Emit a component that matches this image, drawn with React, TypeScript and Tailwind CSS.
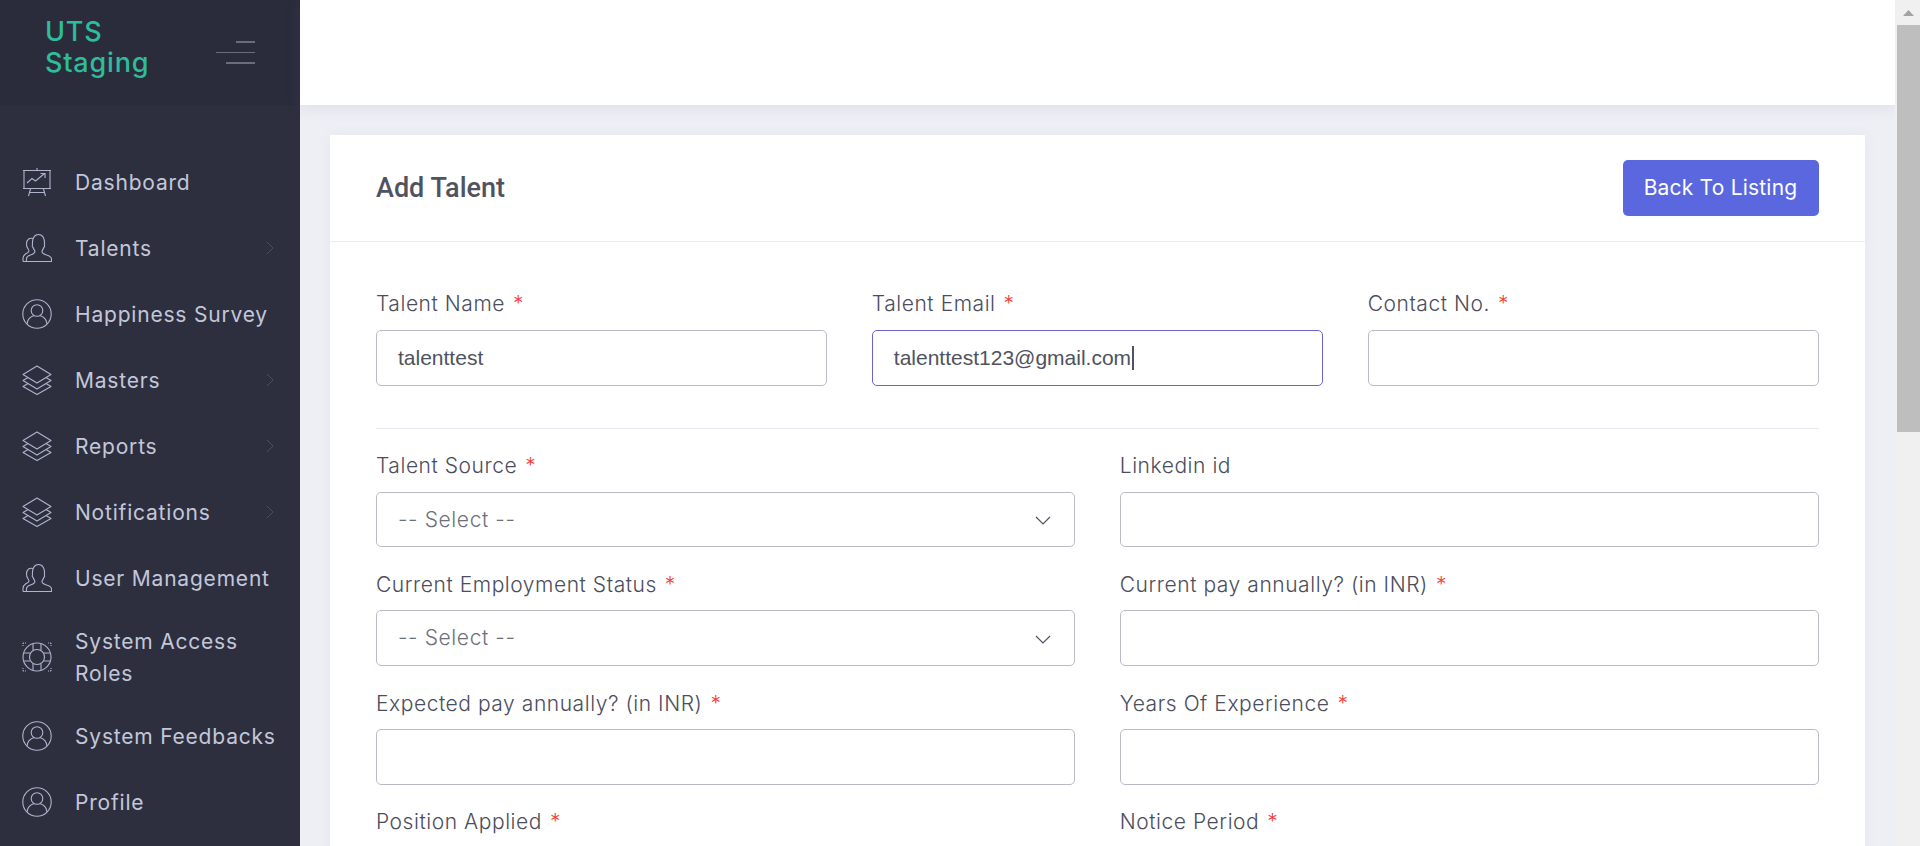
import React from "react";

const poppinsLike = "font-[family-name:Inter,sans-serif]";

function PresentationIcon() {
  return (
    <svg width="30" height="30" viewBox="0 0 30 30" fill="none" stroke="#aeb4cc" strokeWidth="1.1">
      <path d="M15 1v2M1 3.500h28M2 3.500V21.500h26V3.500M1 21.500h28" />
      <path d="M5 16l5-4.500 3.500 2.500 9-7.500M18.500 6.500h4.500v4.500" />
      <path d="M8.500 22l-2 7M21.500 22l2 7M7.500 25.500h15" />
    </svg>
  );
}

function UsersIcon() {
  return (
    <svg width="30" height="30" viewBox="0 0 30 30" fill="none" stroke="#aeb4cc" strokeWidth="1.1">
      <path d="M1 28.500h28.500V26c0-2-1.500-3-5-4-2.500-.8-4.500-1.500-4.500-3.500 0-1 1.200-2 1.800-4 .6-.3 1-1.500.6-2.700C23 6 21 1.500 16.500 1.500S10 6 10.500 11.800c-.4 1.200 0 2.400.6 2.700.6 2 1.800 3 1.800 4 0 2-2 2.700-4.500 3.500-2.500.8-3.800 1.800-3.900 3.500l-.1 3.500" />
      <path d="M11 5.500C8 4.500 4.500 6 4.500 11c0 1.500.3 3 1.200 4.300.5 1 1.300 1.700 1.300 2.700 0 1.500-2 2.200-3.500 3C2 22 1 23.500 1 25.500v3" />
    </svg>
  );
}

function UserCircleIcon() {
  return (
    <svg width="30" height="30" viewBox="0 0 30 30" fill="none" stroke="#aeb4cc" strokeWidth="1.1">
      <circle cx="15" cy="15" r="14.200" />
      <circle cx="15" cy="11.500" r="5.800" />
      <path d="M5 25c.5-5 4-7.500 7-8.500M25 25c-.5-5-4-7.500-7-8.500" />
    </svg>
  );
}

function LayersIcon() {
  return (
    <svg width="30" height="30" viewBox="0 0 30 30" fill="none" stroke="#aeb4cc" strokeWidth="1.1" strokeLinejoin="round">
      <path d="M15 1L29 9.500 15 18 1 9.500z" />
      <path d="M6 12.500L1 15.500 15 24l14-8.500-5-3" />
      <path d="M6 18.500L1 21.500 15 29.500l14-8-5-3" />
    </svg>
  );
}

function LifebuoyIcon() {
  return (
    <svg width="30" height="30" viewBox="0 0 30 30" fill="none" stroke="#aeb4cc" strokeWidth="1.1">
      <circle cx="15" cy="15" r="14" />
      <circle cx="15" cy="15" r="7.500" />
      <path d="M11 2v6.500M19 2v6.500M11 21.500V28M19 21.500V28M2 11h6.500M2 19h6.500M21.500 11H28M21.500 19H28" />
      <path d="M1 1h4M1 1v4M29 1h-4M29 1v4M1 29h4M1 29v-4M29 29h-4M29 29v-4" strokeDasharray="1 1" />
    </svg>
  );
}

function ChevronRight() {
  return (
    <svg width="8" height="14" viewBox="0 0 8 14" fill="none" stroke="#4b4e63" strokeWidth="1">
      <path d="M1 1l6 6-6 6" />
    </svg>
  );
}

type NavItem = { label: React.ReactNode; icon: React.ReactNode; arrow?: boolean; tall?: boolean };

const nav: NavItem[] = [
  { label: "Dashboard", icon: <PresentationIcon /> },
  { label: "Talents", icon: <UsersIcon />, arrow: true },
  { label: "Happiness Survey", icon: <UserCircleIcon /> },
  { label: "Masters", icon: <LayersIcon />, arrow: true },
  { label: "Reports", icon: <LayersIcon />, arrow: true },
  { label: "Notifications", icon: <LayersIcon />, arrow: true },
  { label: "User Management", icon: <UsersIcon /> },
  { label: <>System Access<br />Roles</>, icon: <LifebuoyIcon />, tall: true },
  { label: "System Feedbacks", icon: <UserCircleIcon /> },
  { label: "Profile", icon: <UserCircleIcon /> },
];

function Sidebar() {
  return (
    <aside className="w-[300px] shrink-0 bg-[#2d2f3f]">
      <div className="flex h-[105px] items-center justify-between bg-[#2a2c3c] pl-[45px] pr-[45px]">
        <div className={`${poppinsLike} mb-[11px] text-[27px] leading-[31px] font-medium tracking-[0.8px] text-[#2dbd9b]`}>
          UTS<br />Staging
        </div>
        <div className="flex flex-col items-end gap-[9px]">
          <span className="h-[2px] w-[19px] bg-[#6a6c7e]" />
          <span className="h-[1px] w-[39px] bg-[#6a6c7e]" />
          <span className="h-[2px] w-[29px] bg-[#6a6c7e]" />
        </div>
      </div>
      <nav className="pt-[44px]">
        {nav.map((item, i) => (
          <div key={i} className={`flex items-center pl-[22px] pr-[26px] ${item.tall ? "h-[92px]" : "h-[66px]"}`}>
            <span className="flex w-[53px] shrink-0">{item.icon}</span>
            <span className={`${poppinsLike} flex-1 pt-[2px] text-[21px] leading-[32px] tracking-[0.8px] whitespace-nowrap text-[#c3c7da]`}>{item.label}</span>
            {item.arrow && <ChevronRight />}
          </div>
        ))}
      </nav>
    </aside>
  );
}

function Label({ text, required = true }: { text: string; required?: boolean }) {
  return (
    <label className={`${poppinsLike} block h-[30px] pt-[1px] text-[21px] leading-[30px] font-light tracking-[0.55px] text-[#4a4d5c] whitespace-nowrap`}>
      {text}
      {required && <span className="ml-[8px] text-[#f4433c]">*</span>}
    </label>
  );
}

const boxClass = "block w-full rounded-[5px] border border-[#b9bbc9] bg-white px-[21px] outline-none";
const valueClass = "font-[family-name:'Liberation_Sans',Arial,sans-serif] text-[21px] text-[#4f5261]";

function InputField({ label, value, required = true, heightClass = "h-[55.5px]" }: { label: string; value?: string; required?: boolean; heightClass?: string }) {
  return (
    <div>
      <Label text={label} required={required} />
      <input readOnly defaultValue={value} className={`${boxClass} ${heightClass} ${valueClass} mt-[11.5px]`} />
    </div>
  );
}

function FocusedField({ label, value }: { label: string; value: string }) {
  return (
    <div>
      <Label text={label} />
      <div className={`mt-[11.5px] flex h-[56px] items-center rounded-[5px] border border-[#6b64cf] bg-white px-[21px] ${valueClass}`}>
        {value}
        <span className="ml-[1px] h-[24px] w-[2px] bg-[#4f5261]" />
      </div>
    </div>
  );
}

function SelectField({ label }: { label: string }) {
  return (
    <div>
      <Label text={label} />
      <div className={`${boxClass} h-[55.5px] mt-[11.5px] flex items-center justify-between`}>
        <span className={`${poppinsLike} text-[21px] font-light tracking-[0.6px] text-[#6c6f7e]`}>-- Select --</span>
        <svg width="16" height="9" viewBox="0 0 16 9" fill="none" stroke="#4f5261" strokeWidth="1.2" className="mr-[2px] mt-[3px]">
          <path d="M1 1l7 7 7-7" />
        </svg>
      </div>
    </div>
  );
}

function Scrollbar() {
  return (
    <div className="flex w-[25px] shrink-0 flex-col items-end bg-[#f0f0f0]">
      <div className="flex h-[25px] w-full items-center justify-center pl-[2px]">
        <svg width="11" height="6" viewBox="0 0 11 6" fill="#a3a3a3"><path d="M5.500 0L11 6H0z" /></svg>
      </div>
      <div className="h-[407px] w-[23px] bg-[#bebebe]" />
    </div>
  );
}

export default function App() {
  return (
    <div className="flex h-[846px] overflow-hidden bg-white">
      <Sidebar />
      <main className="flex min-w-0 flex-1 flex-col bg-[#eeeff5]">
        <header className="h-[105px] shrink-0 bg-white shadow-[0_2px_14px_rgba(110,115,140,0.14)]" />
        <section className="mx-[30px] mt-[30px] bg-white shadow-[0_0_12px_rgba(110,115,140,0.06)]">
          <div className="flex h-[107px] items-center justify-between border-b border-[#ebedf2] pl-[46px] pr-[46.5px]">
            <h1 className="font-[family-name:Roboto,sans-serif] text-[27px] font-medium text-[#50535f]">Add Talent</h1>
            <button className={`${poppinsLike} h-[56px] w-[196px] rounded-[5px] bg-[#5a67df] text-[21px] tracking-[0.2px] text-white`}>
              Back To Listing
            </button>
          </div>
          <div className="pl-[46px] pr-[46.5px] pt-[46px]">
            <div className="grid grid-cols-3 gap-x-[45px]">
              <InputField label="Talent Name" value="talenttest" heightClass="h-[56px]" />
              <FocusedField label="Talent Email" value="talenttest123@gmail.com" />
              <InputField label="Contact No." heightClass="h-[56px]" />
            </div>
            <div className="mt-[42.5px] mb-[21px] h-px bg-[#e6e7ec]" />
            <div className="grid grid-cols-2 gap-x-[45px] gap-y-[21.800px]">
              <SelectField label="Talent Source" />
              <InputField label="Linkedin id" required={false} />
              <SelectField label="Current Employment Status" />
              <InputField label="Current pay annually? (in INR)" />
              <InputField label="Expected pay annually? (in INR)" />
              <InputField label="Years Of Experience" />
              <InputField label="Position Applied" />
              <InputField label="Notice Period" />
            </div>
          </div>
        </section>
      </main>
      <Scrollbar />
    </div>
  );
}
